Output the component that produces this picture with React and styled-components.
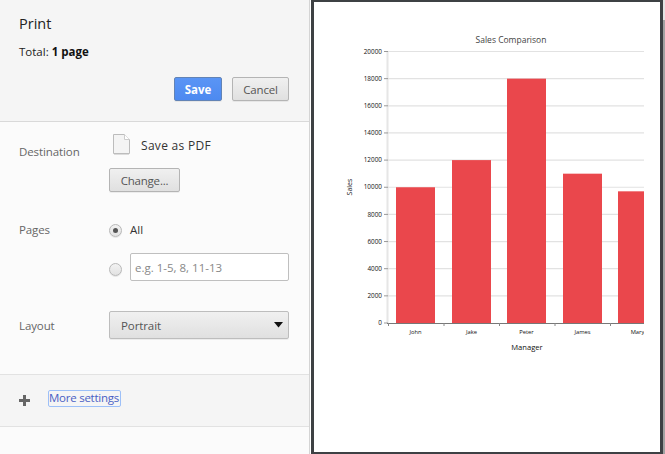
import React from 'react';
import styled, { createGlobalStyle } from 'styled-components';

const Global = createGlobalStyle`
  html, body { margin: 0; padding: 0; background: #fff; }
  * { box-sizing: border-box; }
`;
const FONT = `"Open Sans", "Noto Sans", "Liberation Sans", sans-serif`;

const Page = styled.div`
  display: flex; width: 665px; height: 454px; overflow: hidden;
  font-family: ${FONT}; font-size: 12px; color: #333;
`;
const Sidebar = styled.aside`
  width: 310px; flex: none; display: flex; flex-direction: column;
  background: #fbfbfb; border-right: 1px solid #d4d4d4;
`;
const Header = styled.header`
  height: 122px; flex: none; background: #f5f5f5; border-bottom: 1px solid #d9d9d9;
  padding: 15px 20px 0 19px; display: flex; flex-direction: column;
`;
const Title = styled.h1`
  margin: 0; font-size: 14.5px; font-weight: 400; line-height: 18px; color: #222;
`;
const Total = styled.div`
  margin-top: 11px; font-size: 11.5px; line-height: 16px; color: #222;
  b { font-weight: 700; color: #111; }
`;
const Actions = styled.div`
  margin-top: 17px; display: flex; justify-content: flex-end; gap: 10px;
`;
const Button = styled.button`
  height: 24px; width: ${p => p.$w}px; padding: 0; margin: 0; font-family: ${FONT};
  font-size: 11.5px; letter-spacing: -.2px; color: #555; border: 1px solid #b4b4b4; border-radius: 2px;
  background: linear-gradient(#f0f0f0, #e0e0e0); box-shadow: 0 1px 0 rgba(0,0,0,.06);
`;
const PrimaryButton = styled(Button)`
  color: #fff; font-weight: 700; letter-spacing: 0;
  background: linear-gradient(#5a95f5, #4d8af0); border: 1px solid #6283b5;
`;
const Settings = styled.div`
  display: flex; flex-direction: column; gap: 30px; padding: 12px 20px 35px 19px;
  height: 252px; flex: none;
`;
const Row = styled.div`
  display: grid; grid-template-columns: 90px 180px;
`;
const Label = styled.div`
  font-size: 11.5px; line-height: 16px; letter-spacing: -.1px; color: #666; padding-top: ${p => p.$top}px;
`;
const Controls = styled.div`
  display: flex; flex-direction: column; align-items: flex-start; gap: ${p => p.$gap}px;
`;
const DocRow = styled.div`
  display: flex; align-items: flex-start; height: 20px; padding-left: 4px; gap: 11px;
`;
const DocName = styled.span`
  font-size: 12px; line-height: 24px; letter-spacing: .3px; color: #333;
`;
const RadioRow = styled.div`
  display: flex; align-items: center; gap: 8px; width: 100%;
`;
const Radio = styled.span`
  width: 13px; height: 13px; flex: none; border-radius: 50%; border: 1px solid #b8b8b8;
  margin-top: ${p => p.$drop || 0}px;
  background: linear-gradient(#f2f2f2, #e2e2e2); box-shadow: 0 1px 0 rgba(0,0,0,.08);
  display: flex; align-items: center; justify-content: center;
  &::after {
    content: ''; width: 5px; height: 5px; border-radius: 50%;
    background: ${p => (p.$on ? '#555' : 'transparent')};
  }
`;
const RadioText = styled.span`
  font-size: 11.5px; line-height: 16px; color: #333;
`;
const RangeInput = styled.input`
  flex: 1; min-width: 0; height: 28px; border: 1px solid #bfbfbf; border-radius: 2px;
  padding: 0 4px; background: #fff; font-family: ${FONT}; font-size: 11.5px; outline: none;
  &::placeholder { color: #888; opacity: 1; }
`;
const Select = styled.div`
  width: 180px; height: 28px; display: flex; align-items: center; justify-content: space-between;
  padding: 0 5px 0 11px; font-size: 11.5px; letter-spacing: -.1px; color: #555; border: 1px solid #bdbdbd;
  border-radius: 2px; background: linear-gradient(#f0f0f0, #e0e0e0);
  box-shadow: 0 1px 0 rgba(0,0,0,.06);
`;
const More = styled.div`
  height: 53px; flex: none; display: flex; align-items: center; gap: 18px;
  padding: 0 0 0 19px; background: #f5f5f5;
  border-top: 1px solid #e2e2e2; border-bottom: 1px solid #e2e2e2;
`;
const MoreLink = styled.a`
  display: block; width: 73px; height: 17px; line-height: 14px; white-space: nowrap; overflow: hidden;
  font-size: 11.5px; color: #4a60c4; border: 1px solid #9dc0f8; border-radius: 2px;
  padding-left: 0; letter-spacing: -.25px; margin-bottom: 4px;
`;
const Preview = styled.main`
  flex: 1; display: flex; min-width: 0; background: #fff; padding-left: 1px;
`;
const Paper = styled.div`
  flex: 1; min-width: 0; background: #fff;
  border-style: solid; border-color: #3e4144; border-width: 2px 3px 2px 3px;
`;
const Scroll = styled.div`
  width: 2px; flex: none; background: linear-gradient(#e4e4e4 0 20px, #a2a2a2 20px);
`;
const ChartSvg = styled.svg`
  display: block; width: 100%; height: 100%;
  text { font-family: ${FONT}; fill: #111; }
`;

const TOP = 51.5, ZERO = 323, X0 = 388, X1 = 644;
const yFor = v => ZERO - (v / 20000) * (ZERO - TOP);
const ticks = Array.from({ length: 11 }, (_, i) => i * 2000);
const bars = [
  { name: 'John', v: 10000, x: 396 },
  { name: 'Jake', v: 12000, x: 452 },
  { name: 'Peter', v: 18000, x: 507 },
  { name: 'James', v: 11000, x: 563 },
  { name: 'Mary', v: 9700, x: 618 },
];

function Chart() {
  return (
    <ChartSvg viewBox="314 2 346 450" aria-label="Sales Comparison chart">
      <defs>
        <clipPath id="plot"><rect x="340" y="0" width={X1 - 340} height="454" /></clipPath>
      </defs>
      <text x="511" y="43" fontSize="8.5" textAnchor="middle" style={{ fill: '#444' }}>Sales Comparison</text>
      <line x1={X0 - .5} x2={X0 - .5} y1={TOP} y2={ZERO} stroke="#e6e6e6" strokeWidth="2" />
      {ticks.map(t => (
        <g key={t}>
          {t > 0 && <line x1={X0} x2={X1} y1={yFor(t)} y2={yFor(t)} stroke="#e2e2e2" strokeWidth="1.2" />}
          <line x1={X0 - 4} x2={X0} y1={yFor(t)} y2={yFor(t)} stroke="#999" strokeWidth="1" />
          <text x={X0 - 6} y={yFor(t) + 2.2} fontSize="6.4" textAnchor="end">{t}</text>
        </g>
      ))}
      <g clipPath="url(#plot)">
        {bars.map(b => (
          <rect key={b.name} x={b.x} y={yFor(b.v)} width="39" height={ZERO - yFor(b.v)} fill="#ea474c" />
        ))}
        {bars.map(b => (
          <text key={b.name} x={b.x + 19.5} y="334" fontSize="5.8" textAnchor="middle">{b.name}</text>
        ))}
      </g>
      <line x1={X0 - 1} x2={X1} y1={ZERO + .5} y2={ZERO + .5} stroke="#777" strokeWidth="1" />
      {[0, 1, 2, 3, 4].map(i => (
        <line key={i} x1={388.5 + i * 55.5} x2={388.5 + i * 55.5} y1={ZERO} y2={ZERO + 3} stroke="#888" strokeWidth="1" />
      ))}
      <text x="527" y="350" fontSize="7.6" textAnchor="middle">Manager</text>
      <text transform="translate(352 187) rotate(-90)" fontSize="7" textAnchor="middle">Sales</text>
    </ChartSvg>
  );
}

export default function App() {
  return (
    <Page>
      <Global />
      <Sidebar>
        <Header>
          <Title>Print</Title>
          <Total>Total: <b>1 page</b></Total>
          <Actions>
            <PrimaryButton $w={48}>Save</PrimaryButton>
            <Button $w={57}>Cancel</Button>
          </Actions>
        </Header>
        <Settings>
          <Row>
            <Label $top={10}>Destination</Label>
            <Controls $gap={14}>
              <DocRow>
                <svg width="17" height="21" viewBox="0 0 17 21">
                  <path d="M.5.5H11.5L16.5 5.5V19.5H.5Z" fill="#f4f4f4" stroke="#bcbcbc" />
                  <path d="M11.5.5V5.5H16.5" fill="#fff" stroke="#cccccc" />
                  <path d="M1 20.5H16" stroke="#dcdcdc" />
                </svg>
                <DocName>Save as PDF</DocName>
              </DocRow>
              <Button $w={71}>Change...</Button>
            </Controls>
          </Row>
          <Row>
            <Label $top={0}>Pages</Label>
            <Controls $gap={15}>
              <RadioRow><Radio $on /><RadioText>All</RadioText></RadioRow>
              <RadioRow><Radio $drop={4} /><RangeInput placeholder="e.g. 1-5, 8, 11-13" /></RadioRow>
            </Controls>
          </Row>
          <Row>
            <Label $top={7}>Layout</Label>
            <Select>
              Portrait
              <svg width="9" height="6" viewBox="0 0 9 6"><path d="M0 0H9L4.5 5.5Z" fill="#111" /></svg>
            </Select>
          </Row>
        </Settings>
        <More>
          <svg width="11" height="11" viewBox="0 0 11 11"><path d="M4 0H7V4H11V7H7V11H4V7H0V4H4Z" fill="#666" /></svg>
          <MoreLink>More settings</MoreLink>
        </More>
      </Sidebar>
      <Preview>
        <Paper><Chart /></Paper>
        <Scroll />
      </Preview>
    </Page>
  );
}
